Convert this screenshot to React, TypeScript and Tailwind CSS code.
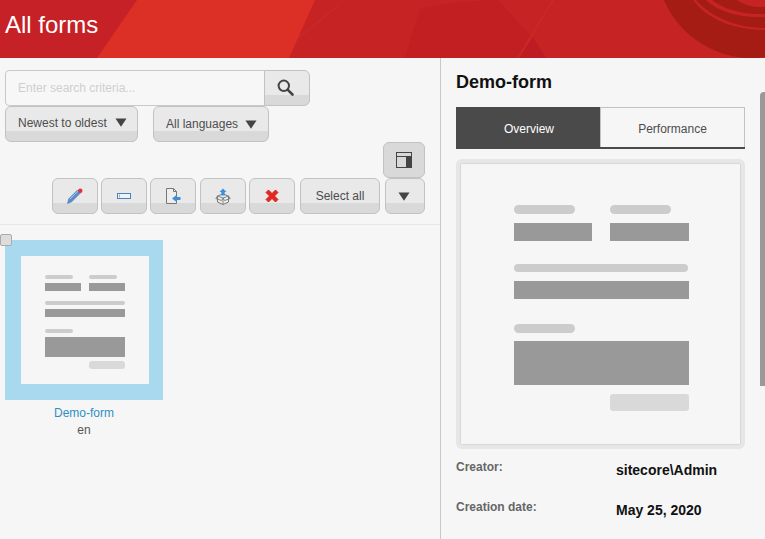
import React from 'react';

const btn =
  'flex items-center justify-center rounded-md border border-[#c2c2c2] bg-[linear-gradient(#e9e9e9_0%,#e9e9e9_70%,#d9d9d9_71%,#d9d9d9_100%)] text-xs text-[#4d4d4d]';

const Caret = ({ className = '' }: { className?: string }) => (
  <svg width="12" height="9" viewBox="0 0 12 9" className={className}>
    <path d="M0.500 0.500h11L6 8.800z" fill="#444" />
  </svg>
);

const HeaderArt = () => (
  <svg width="765" height="58" viewBox="0 0 765 58" className="absolute top-0 left-0">
    <rect width="765" height="58" fill="#c62424" />
    <path d="M0 0h137L97 58H0z" fill="#c52126" />
    <path d="M137 0h178l-26 58H97z" fill="#dc3026" />
    <path d="M298 38l40-32" stroke="#d0342c" strokeWidth="0.6" fill="none" />
    <path d="M420 8l30-5 40-3h8l32 35-12 23H405z" fill="#c21f22" />
    <path d="M518 58l35-58" stroke="#cf3a32" strokeWidth="0.5" fill="none" />
    <path d="M519 58l14-21 13 21z" fill="#bd1d22" />
    <circle cx="752" cy="-38" r="96" fill="#a41c14" />
    <path d="M693 0c12 17 38 30 72 30v-2c-30 0-55-12-69-28z" fill="#c62424" />
    <path d="M706 0c10 10 30 18 59 17v-3c-25 1-43-6-53-14z" fill="#c62424" />
    <path d="M737 0c7 5 17 8 28 7V0z" fill="#c62424" />
  </svg>
);

const PencilIcon = () => (
  <svg width="16" height="16" viewBox="0 0 16 16">
    <path d="M0.500 15.500l1-4.500L10.500 2l3 3L4.500 14z" fill="#5b8dc9" stroke="#4a7cbb" strokeWidth="0.5" />
    <path d="M2.800 11.200l8-8" stroke="#a9c7ea" strokeWidth="1" />
    <circle cx="13.300" cy="2.700" r="2.200" fill="#e0323a" />
  </svg>
);

const RectIcon = () => (
  <svg width="14" height="6" viewBox="0 0 14 6">
    <rect x="0.500" y="0.500" width="13" height="5" fill="#eef3f8" stroke="#4a82bd" />
    <path d="M2.500 1.500v3" stroke="#aaa" />
  </svg>
);

const ImportIcon = () => (
  <svg width="15" height="16" viewBox="0 0 15 16">
    <path d="M0.500 0.500h7l3 3v12h-10z" fill="#eeeeee" stroke="#777" />
    <path d="M7.500 0.500v3h3" fill="none" stroke="#777" />
    <path d="M6 10.500l4.500-3.500v2h4v3h-4v2z" fill="#3f8fd6" />
  </svg>
);

const BoxIcon = () => (
  <svg width="16" height="17" viewBox="0 0 16 17">
    <path d="M2.500 8l5.500-2 5.500 2v6l-5.500 2.500L2.500 14z" fill="#ececec" stroke="#7a7a7a" />
    <path d="M2.500 8L8 10l5.500-2M8 10v6.500M2.500 8L0.800 10.500 6.500 12.500 8 10l1.500 2.500 5.700-2L13.500 8" fill="none" stroke="#7a7a7a" strokeWidth="0.9" />
    <path d="M8 0.500l3.500 3.500H9.700v3.500H6.300V4H4.500z" fill="#3f8fd6" />
  </svg>
);

const CrossIcon = () => (
  <svg width="14" height="14" viewBox="0 0 14 14">
    <path d="M1 3.500L3.500 1 7 4.500 10.500 1 13 3.500 9.500 7 13 10.500 10.500 13 7 9.500 3.500 13 1 10.500 4.500 7z" fill="#e0271f" stroke="#e0271f" strokeLinejoin="round" />
  </svg>
);

const SearchIcon = () => (
  <svg width="17" height="17" viewBox="0 0 17 17">
    <circle cx="6.800" cy="6.800" r="5.200" fill="none" stroke="#444" strokeWidth="2" />
    <path d="M10.800 10.800L15.500 15.500" stroke="#444" strokeWidth="2.600" strokeLinecap="round" />
  </svg>
);

const LayoutIcon = () => (
  <svg width="16" height="16" viewBox="0 0 16 16">
    <rect x="0.500" y="0.500" width="15" height="15" fill="none" stroke="#444" />
    <path d="M1 4.500h14" stroke="#444" />
    <rect x="10" y="5" width="6" height="11" fill="#444" />
  </svg>
);

const BigPreview = () => (
  <div className="flex h-full flex-col pt-[41px] pl-[53px]">
    <div className="flex gap-[35px]">
      <div className="h-[9px] w-[61px] rounded-full bg-[#cccccc]" />
      <div className="h-[9px] w-[61px] rounded-full bg-[#cccccc]" />
    </div>
    <div className="mt-[9px] flex gap-[18px]">
      <div className="h-[18px] w-[78px] bg-[#999999]" />
      <div className="h-[18px] w-[79px] bg-[#999999]" />
    </div>
    <div className="mt-[23px] h-[8px] w-[174px] rounded-full bg-[#cccccc]" />
    <div className="mt-[9px] h-[18px] w-[175px] bg-[#999999]" />
    <div className="mt-[25px] h-[9px] w-[61px] rounded-full bg-[#cccccc]" />
    <div className="mt-[8px] h-[44px] w-[175px] bg-[#999999]" />
    <div className="mt-[9px] ml-[96px] h-[17px] w-[79px] rounded-[3px] bg-[#d9d9d9]" />
  </div>
);

const ThumbPreview = () => (
  <div className="flex h-full flex-col pt-[19px] pl-[24px]">
    <div className="flex gap-[16px]">
      <div className="h-[4px] w-[28px] rounded-full bg-[#cccccc]" />
      <div className="h-[4px] w-[28px] rounded-full bg-[#cccccc]" />
    </div>
    <div className="mt-[4px] flex gap-[8px]">
      <div className="h-[8px] w-[36px] bg-[#999999]" />
      <div className="h-[8px] w-[36px] bg-[#999999]" />
    </div>
    <div className="mt-[10px] h-[4px] w-[80px] rounded-full bg-[#cccccc]" />
    <div className="mt-[4px] h-[8px] w-[80px] bg-[#999999]" />
    <div className="mt-[12px] h-[4px] w-[28px] rounded-full bg-[#cccccc]" />
    <div className="mt-[4px] h-[20px] w-[80px] bg-[#999999]" />
    <div className="mt-[4px] ml-[44px] h-[8px] w-[36px] rounded-[3px] bg-[#d9d9d9]" />
  </div>
);

export default function App() {
  return (
    <div className="flex h-[539px] w-[765px] flex-col overflow-hidden bg-[#f6f6f6] font-['Liberation_Sans',Arial,sans-serif]">
      <header className="relative h-[58px] shrink-0">
        <HeaderArt />
        <h1 className="relative pt-[11px] pl-[5px] text-2xl leading-[28px] text-white">All forms</h1>
      </header>

      <div className="relative flex min-h-0 flex-1">
        <section className="w-[440px] shrink-0 pt-[12px]">
          <div className="flex pl-[5px]">
            <div className="flex h-[36px] w-[260px] items-center rounded-l-[4px] border border-[#c9c9c9] bg-[#f7f7f7] pl-[12px] text-xs text-[#cfcfcf]">
              Enter search criteria...
            </div>
            <button className={`${btn} -ml-px h-[36px] w-[46px] rounded-l-none pr-[4px] pb-[2px]`}>
              <SearchIcon />
            </button>
          </div>

          <div className="flex gap-[15px] pl-[5px]">
            <button className={`${btn} h-[36px] w-[133px] justify-start gap-[8px] pb-[3px] pl-[12px]`}>
              Newest to oldest <Caret />
            </button>
            <button className={`${btn} h-[36px] w-[116px] justify-start gap-[7px] pl-[12px]`}>
              All languages <Caret />
            </button>
          </div>

          <div className="flex justify-end pr-[15px]">
            <button className="flex h-[36px] w-[42px] items-center justify-center rounded-md border border-[#c2c2c2] bg-[#d9d9d9]">
              <LayoutIcon />
            </button>
          </div>

          <div className="flex justify-end pr-[15px]">
            <button className={`${btn} h-[36px] w-[46px]`}><PencilIcon /></button>
            <button className={`${btn} ml-[3px] h-[36px] w-[46px]`}><RectIcon /></button>
            <button className={`${btn} ml-[3px] h-[36px] w-[46px]`}><ImportIcon /></button>
            <button className={`${btn} ml-[4px] h-[36px] w-[46px]`}><BoxIcon /></button>
            <button className={`${btn} ml-[3px] h-[36px] w-[46px]`}><CrossIcon /></button>
            <button className={`${btn} ml-[5px] h-[36px] w-[80px]`}>Select all</button>
            <button className={`${btn} ml-[5px] h-[36px] w-[40px] pr-[2px]`}><Caret /></button>
          </div>

          <div className="mt-[10px] border-t border-[#e6e6e6]" />

          <div className="relative mt-[15px] ml-[5px] w-[158px]">
            <div className="absolute -top-[6px] -left-[5px] h-[12px] w-[12px] rounded-[2px] border border-[#aaaaaa] bg-[#dddddd]" />
            <div className="h-[160px] bg-[#a8d9ef] pt-[16px] pl-[16px]">
              <div className="h-[128px] w-[128px] bg-[#f6f6f6]">
                <ThumbPreview />
              </div>
            </div>
            <div className="mt-[5px] text-center text-xs leading-[17px] text-[#2f8fc4]">Demo-form</div>
            <div className="text-center text-xs leading-[17px] text-[#555555]">en</div>
          </div>
        </section>

        <aside className="relative flex-1 border-l border-[#c8c8c8] pr-[20px] pl-[15px]">
          <h2 className="pt-[14px] text-lg leading-[21px] font-bold text-[#111111]">Demo-form</h2>

          <div className="mt-[14px] flex h-[42px] border-b-2 border-[#4a4a4a] text-xs">
            <div className="flex w-[144px] items-center justify-center bg-[#4a4a4a] pt-[3px] pl-[2px] text-white">Overview</div>
            <div className="flex flex-1 items-center justify-center border-t border-r border-l border-[#c2c2c2] pt-[2px] text-[#4d4d4d]">
              Performance
            </div>
          </div>

          <div className="mt-[10px] h-[290px] rounded-md border-4 border-[#e6e6e6]">
            <div className="h-full rounded-[2px] border border-[#d8d8d8]">
              <BigPreview />
            </div>
          </div>

          <div className="mt-[11px] flex text-xs font-bold">
            <div className="w-[160px] leading-[14px] text-[#666666]">Creator:</div>
            <div className="pt-[2px] text-sm leading-[16px] text-[#111111]">sitecore\Admin</div>
          </div>
          <div className="mt-[22px] flex text-xs font-bold">
            <div className="w-[160px] leading-[14px] text-[#666666]">Creation date:</div>
            <div className="pt-[2px] text-sm leading-[16px] text-[#111111]">May 25, 2020</div>
          </div>

          <div className="absolute top-[34px] right-0 h-[294px] w-[5px] rounded-tl-[4px] bg-[#999999]" />
        </aside>
      </div>
    </div>
  );
}
